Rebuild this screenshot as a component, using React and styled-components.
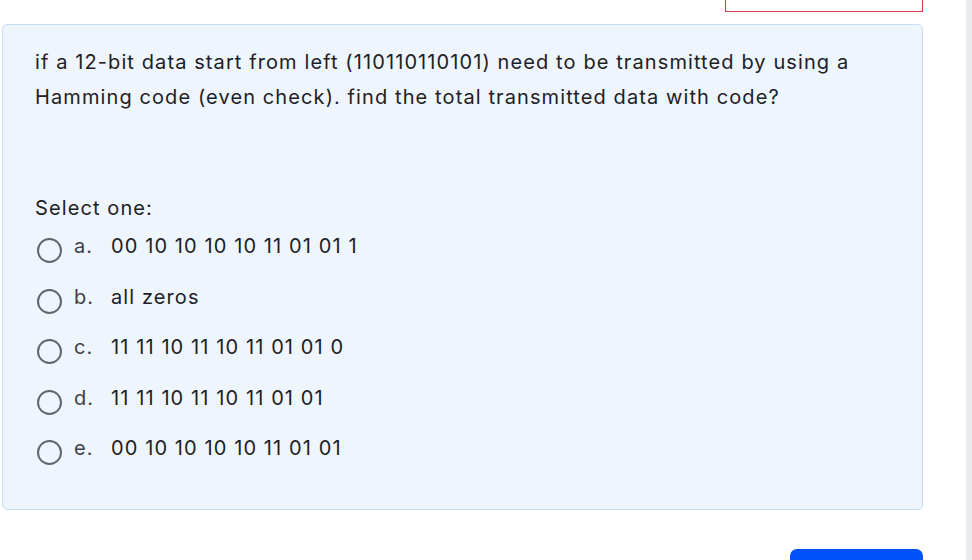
import React from 'react';
import styled, { createGlobalStyle } from 'styled-components';

const GlobalStyle = createGlobalStyle`
    html, body {
        margin: 0;
        padding: 0;
        background: #ffffff;
        overflow: hidden;
    }
    body {
        font-family: Inter, "Noto Sans", "Liberation Sans", sans-serif;
        color: #1d2125;
    }
`;

const Page = styled.div`
    display: flex;
    width: 972px;
    height: 560px;
    overflow: hidden;
`;

const Main = styled.div`
    width: 921px;
    padding-left: 2px;
    display: flex;
    flex-direction: column;
`;

const Gutter = styled.div`
    flex: 1;
`;

const Drawer = styled.div`
    width: 6px;
    background: #e8ebee;
`;

const TopRow = styled.div`
    display: flex;
    justify-content: flex-end;
    height: 12px;
    margin-bottom: 12px;
    flex-shrink: 0;
`;

const FlagBox = styled.div`
    width: 196px;
    height: 11px;
    border: 1px solid #d9363e;
    border-top: none;
`;

const QuestionCard = styled.div`
    background: #eef5fd;
    border: 1px solid #c9ddf2;
    border-radius: 5px;
    height: 486px;
    flex-shrink: 0;
    box-sizing: border-box;
    padding: 20px 32px 0;
    letter-spacing: 1.1px;
`;

const QuestionText = styled.p`
    margin: 0;
    font-size: 20px;
    line-height: 35px;
    color: #1d2125;
`;

const Prompt = styled.div`
    margin-top: 78px;
    font-size: 20px;
    line-height: 30px;
`;

const Options = styled.div`
    display: flex;
    flex-direction: column;
    gap: 20.5px;
    margin-top: 8px;
`;

const Option = styled.label`
    display: flex;
    align-items: center;
    height: 30px;
    font-size: 20px;
    color: #1d2125;
`;

const Radio = styled.span`
    width: 21px;
    height: 21px;
    border: 2px solid #5f6673;
    border-radius: 50%;
    margin: 9px 12px 0 2px;
    box-sizing: content-box;
    flex-shrink: 0;
`;

const Letter = styled.span`
    width: 37px;
    color: #3c4147;
`;

const Footer = styled.div`
    display: flex;
    justify-content: flex-end;
    margin-top: 39px;
    flex-shrink: 0;
`;

const NextButton = styled.button`
    width: 133px;
    height: 40px;
    border: none;
    border-radius: 7px;
    background: #0051fa;
    color: #fff;
`;

const options = [
    ['a.', '00 10 10 10 10 11 01 01 1'],
    ['b.', 'all zeros'],
    ['c.', '11 11 10 11 10 11 01 01 0'],
    ['d.', '11 11 10 11 10 11 01 01'],
    ['e.', '00 10 10 10 10 11 01 01'],
];

const App = () => (
    <>
        <GlobalStyle />
        <Page>
            <Main>
                <TopRow>
                    <FlagBox />
                </TopRow>
                <QuestionCard>
                    <QuestionText>
                        if a 12-bit data start from left (110110110101) need to be transmitted by using a
                        Hamming code (even check). find the total transmitted data with code?
                    </QuestionText>
                    <Prompt>Select one:</Prompt>
                    <Options>
                        {options.map(([letter, text]) => (
                            <Option key={letter}>
                                <Radio />
                                <Letter>{letter}</Letter>
                                {text}
                            </Option>
                        ))}
                    </Options>
                </QuestionCard>
                <Footer>
                    <NextButton />
                </Footer>
            </Main>
            <Gutter />
            <Drawer />
        </Page>
    </>
);

export default App;
